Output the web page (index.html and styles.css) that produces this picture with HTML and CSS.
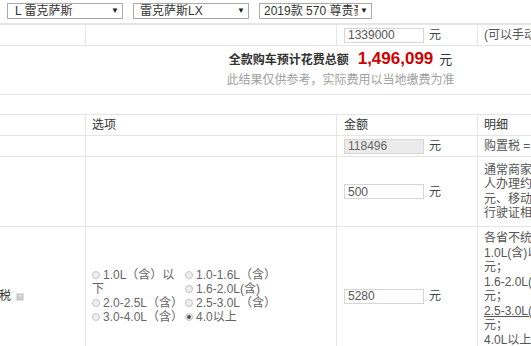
FILE: index.html
```html
<!DOCTYPE html>
<html lang="zh-CN">
<head>
    <meta charset="UTF-8">
    <meta name="viewport" content="width=device-width, initial-scale=1.0">
    <title>购车费用计算</title>
    <link rel="stylesheet" href="styles.css">
</head>
<body>
    <!-- 车型选择 -->
    <div class="topbar">
        <div class="sel sel-brand"><span class="sel-text">L 雷克萨斯</span><span class="sel-arrow">▼</span></div>
        <div class="sel sel-series"><span class="sel-text">雷克萨斯LX</span><span class="sel-arrow">▼</span></div>
        <div class="sel sel-spec"><span class="sel-text">2019款 570 尊贵豪华版</span><span class="sel-arrow">▼</span></div>
    </div>

    <table class="calc">
        <colgroup>
            <col class="c-name">
            <col class="c-opt">
            <col class="c-money">
            <col class="c-desc">
        </colgroup>
        <tr class="row-price">
            <td>裸车价格</td>
            <td></td>
            <td><input class="money" type="text" value="1339000"><span class="unit">元</span></td>
            <td class="desc">(可以手动修改)</td>
        </tr>
        <tr class="row-total">
            <td colspan="4">
                <div class="total-line">
                    <span class="total-label">全款购车预计花费总额</span><span class="total-num">1,496,099</span><span class="total-unit">元</span>
                </div>
                <div class="total-note">此结果仅供参考，实际费用以当地缴费为准</div>
            </td>
        </tr>
        <tr class="row-gap"><td colspan="4"></td></tr>
        <tr class="row-head">
            <th>项目</th>
            <th>选项</th>
            <th>金额</th>
            <th>明细</th>
        </tr>
        <tr class="row-tax">
            <td>购置税</td>
            <td></td>
            <td><input class="money readonly" type="text" value="118496" readonly><span class="unit">元</span></td>
            <td class="desc">购置税 = 购车款/(1+17%)×购置税率(10%)</td>
        </tr>
        <tr class="row-plate">
            <td>上牌费用</td>
            <td></td>
            <td><input class="money" type="text" value="500"><span class="unit">元</span></td>
            <td class="desc">
                通常商家提供的上牌服务费用为500元，个<br>
                人办理约需要373元，其中车牌费100<br>
                元、移动证30元、环保标5元、拓号费40<br>
                行驶证相片20元、上牌服务费198元。
            </td>
        </tr>
        <tr class="row-vvt">
            <td><span class="name">车船使用税</span><span class="help">?</span></td>
            <td>
                <div class="opts">
                    <label class="opt"><span class="radio"></span>1.0L（含）以下</label>
                    <label class="opt"><span class="radio"></span>1.0-1.6L（含）</label>
                    <label class="opt"><span class="radio"></span>1.6-2.0L(含)</label>
                    <label class="opt"><span class="radio"></span>2.0-2.5L（含）</label>
                    <label class="opt"><span class="radio"></span>2.5-3.0L（含）</label>
                    <label class="opt"><span class="radio"></span>3.0-4.0L（含）</label>
                    <label class="opt"><span class="radio on"></span>4.0以上</label>
                </div>
            </td>
            <td><input class="money" type="text" value="5280"><span class="unit">元</span></td>
            <td class="desc">
                各省不统一，以北京为例(单位/年)：<br>
                1.0L(含)以下300元；1.0-1.6L(含)420<br>
                元；<br>
                1.6-2.0L(含)480元；2.0-2.5L(含)900<br>
                元；<br>
                <span class="ul">2.5-3.0L(含)1920元；3.0-4.0L(含)3480</span><br>
                元；<br>
                4.0L以上5280元。<br>
                乘用车按排量收取。
            </td>
        </tr>
    </table>
</body>
</html>
```

FILE: styles.css
```css
html, body {
    overflow: hidden;
}

body {
    margin: 0;
    padding: 0;
    background-color: #fff;
    font-family: "Liberation Sans", "Noto Sans CJK SC", sans-serif;
    font-size: 12px;
    color: #333;
}

.topbar {
    display: flex;
    gap: 10px;
    height: 24px;
    padding: 3px 0 0 7px;
    box-sizing: border-box;
    border-bottom: 1px solid #e5e5e5;
}

.sel {
    display: flex;
    align-items: center;
    justify-content: space-between;
    height: 16px;
    padding: 0 3px 0 7px;
    box-sizing: border-box;
    border: 1px solid #a9a9a9;
    background-color: #fff;
    line-height: 14px;
    color: #333;
    overflow: hidden;
    white-space: nowrap;
}

.sel-brand { width: 116px; }
.sel-series { width: 116px; padding-left: 6px; }
.sel-spec { width: 113px; padding-left: 4px; }

.sel-text {
    overflow: hidden;
    flex: 1;
}

.sel-arrow {
    font-size: 8px;
    color: #222;
    margin-left: 2px;
}

.calc {
    table-layout: fixed;
    width: 790px;
    margin-left: -60px;
    border-collapse: collapse;
}

.c-name { width: 145px; }
.c-opt { width: 251px; }
.c-money { width: 141px; }
.c-desc { width: 253px; }

.calc td, .calc th {
    border: 1px solid #e5e5e5;
    padding: 0 6px;
    text-align: left;
    vertical-align: middle;
    white-space: nowrap;
    overflow: hidden;
    line-height: 14px;
}

.calc td:first-child {
    padding-left: 10px;
}

.calc td:nth-child(3), .calc th:nth-child(3) {
    padding-left: 7px;
}

.calc th {
    font-weight: normal;
    color: #333;
}

.row-price, .row-head, .row-tax { height: 21px; }
.row-gap { height: 20px; }
.row-plate { height: 70px; }

.row-total td {
    text-align: center;
    padding: 2px 0 5px;
}

.total-line {
    line-height: 22px;
}

.total-label {
    font-weight: bold;
    color: #333;
    margin-right: 9px;
}

.total-num {
    font-size: 17px;
    font-weight: bold;
    color: #d10000;
}

.total-unit {
    font-size: 13px;
    margin-left: 6px;
}

.total-note {
    line-height: 18px;
    color: #a0a0a0;
}

.money {
    width: 80px;
    height: 15px;
    padding: 0 3px;
    box-sizing: border-box;
    border: 1px solid #d6d6d6;
    font-family: "Liberation Sans", sans-serif;
    font-size: 12px;
    color: #555;
    vertical-align: middle;
}

.money.readonly {
    background-color: #ebebeb;
    color: #666;
}

.unit {
    margin-left: 5px;
    color: #444;
    vertical-align: middle;
}

.desc {
    color: #555;
}

.row-plate .desc, .row-vvt .desc {
    padding-top: 4px;
    padding-bottom: 4px;
    line-height: 14.5px;
}

.ul {
    text-decoration: underline;
}

.help {
    display: inline-block;
    width: 6px;
    height: 6px;
    margin-left: 5px;
    background-color: #c8c8c8;
    border: 1px solid #e0e0e0;
    font-size: 5px;
    line-height: 6px;
    color: #fff;
    text-align: center;
    vertical-align: middle;
}

.opts {
    display: flow-root;
    white-space: normal;
    color: #666;
}

.opt {
    float: left;
    width: 93px;
    line-height: 14px;
}

.radio {
    display: inline-block;
    width: 6px;
    height: 6px;
    margin-right: 3px;
    border: 1px solid #c4c4c4;
    border-radius: 50%;
    background-color: #eee;
    vertical-align: 0;
    position: relative;
}

.radio.on::after {
    content: "";
    position: absolute;
    left: 1px;
    top: 1px;
    width: 4px;
    height: 4px;
    border-radius: 50%;
    background-color: #555;
}
```
